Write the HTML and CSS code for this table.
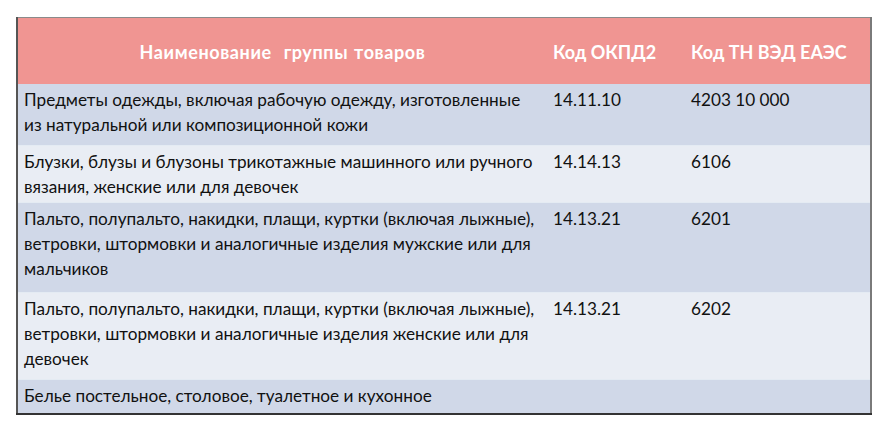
FILE: index.html
```html
<!DOCTYPE html>
<html lang="ru">
<head>
<meta charset="utf-8">
<link rel="stylesheet" href="styles.css">
</head>
<body>
<div class="page">
<table class="goods">
  <colgroup>
    <col class="c1"><col class="c2"><col class="c3">
  </colgroup>
  <thead>
    <tr class="head">
      <th class="name">Наименование&nbsp; группы товаров</th>
      <th>Код ОКПД2</th>
      <th>Код ТН ВЭД ЕАЭС</th>
    </tr>
  </thead>
  <tbody>
    <tr class="dark r1">
      <td>Предметы одежды, включая рабочую одежду, изготовленные<br>из натуральной или композиционной кожи</td>
      <td>14.11.10</td>
      <td>4203 10 000</td>
    </tr>
    <tr class="light r2">
      <td>Блузки, блузы и блузоны трикотажные машинного или ручного<br>вязания, женские или для девочек</td>
      <td>14.14.13</td>
      <td>6106</td>
    </tr>
    <tr class="dark r3">
      <td>Пальто, полупальто, накидки, плащи, куртки (включая лыжные),<br>ветровки, штормовки и аналогичные изделия мужские или для<br>мальчиков</td>
      <td>14.13.21</td>
      <td>6201</td>
    </tr>
    <tr class="light r4">
      <td>Пальто, полупальто, накидки, плащи, куртки (включая лыжные),<br>ветровки, штормовки и аналогичные изделия женские или для<br>девочек</td>
      <td>14.13.21</td>
      <td>6202</td>
    </tr>
    <tr class="dark r5">
      <td>Белье постельное, столовое, туалетное и кухонное</td>
      <td></td>
      <td></td>
    </tr>
  </tbody>
</table>
</div>
</body>
</html>
```
FILE: styles.css
```css
html, body {
  margin: 0;
  padding: 0;
  background: #ffffff;
}
.page {
  padding: 17px 0 0 16px;
}
.goods {
  border-collapse: collapse;
  table-layout: fixed;
  width: 856px;
  font-family: Lato, "Open Sans", sans-serif;
  font-size: 17.2px;
  color: #111111;
  border-top: 1px solid #8a8a8a;
  border-left: 2px solid #555555;
  border-right: 2px solid #7a7a7a;
  border-bottom: 2px solid #333333;
}
.c1 { width: 530px; }
.c2 { width: 138px; }
.c3 { width: 186px; }
.head {
  background: #f09592;
  height: 66px;
}
.head th {
  color: #ffffff;
  font-size: 18px;
  font-weight: bold;
  text-align: left;
  padding: 4px 6px 0;
  vertical-align: middle;
  line-height: 25px;
}
.head th.name {
  text-align: center;
  word-spacing: 1px;
  letter-spacing: 0.6px;
}
td {
  vertical-align: top;
  padding: 3px 6px 0;
  line-height: 25px;
  border-bottom: 1px solid #e4ebf3;
}
.dark { background: #d0d8e8; }
.light { background: #e9edf4; }
.r1 { height: 62px; }
.r2 { height: 57px; }
.r3 { height: 90px; }
.r4 { height: 87px; }
.r5 { height: 34px; }
```
